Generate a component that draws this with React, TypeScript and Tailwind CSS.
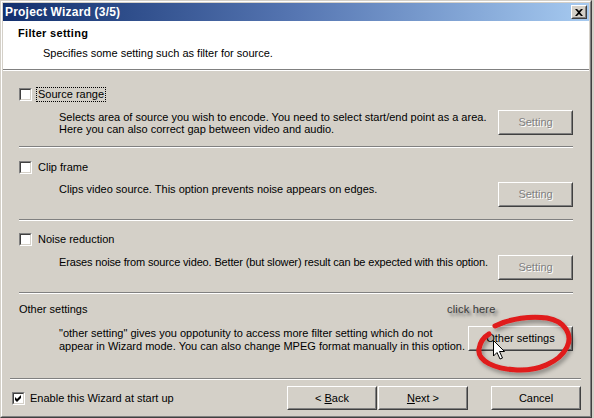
import React from "react";

function Button({
  children,
  w = 75,
  h = 25,
  disabled,
}: {
  children: React.ReactNode;
  w?: number;
  h?: number;
  disabled?: boolean;
}) {
  return (
    <div
      style={{ width: w, height: h }}
      className="shrink-0 bg-[#d4d0c8] border border-t-white border-l-white border-r-[#404040] border-b-[#404040]"
    >
      <div
        className={`h-full w-full border border-t-[#d4d0c8] border-l-[#d4d0c8] border-r-[#808080] border-b-[#808080] flex items-center justify-center leading-none whitespace-nowrap ${
          disabled ? "text-[#808080] [text-shadow:1px_1px_0_#ffffff]" : "text-black"
        }`}
      >
        {children}
      </div>
    </div>
  );
}

function Checkbox({ checked }: { checked?: boolean }) {
  return (
    <div className="w-[13px] h-[13px] shrink-0 border border-t-[#808080] border-l-[#808080] border-r-white border-b-white">
      <div className="w-full h-full border border-t-[#404040] border-l-[#404040] border-r-[#d4d0c8] border-b-[#d4d0c8] bg-white flex items-center justify-center">
        {checked && (
          <svg width="7" height="7" viewBox="0 0 7 7">
            <polygon points="0,2 2,4 6,0 6,3 2,7 0,5" fill="#000" />
          </svg>
        )}
      </div>
    </div>
  );
}

function Sep() {
  return <div className="h-[2px] border-t border-t-[#808080] border-b border-b-white" />;
}

function Section({
  label,
  lines,
  focus,
  tight,
  rowTop,
  btnTop,
  sepTop,
}: {
  label: string;
  lines: string[];
  focus?: boolean;
  tight?: boolean;
  rowTop: string;
  btnTop: string;
  sepTop: string;
}) {
  return (
    <div className="px-[16px]">
      <div className={`${rowTop} h-[16px] flex items-center`}>
        <Checkbox />
        <span
          className={`ml-[4px] px-[1px] leading-[13px] ${
            focus ? "border border-dotted border-black" : "border border-transparent"
          }`}
        >
          {label}
        </span>
      </div>
      <div className={`${btnTop} flex items-start`}>
        <div
          className={`pl-[40px] pt-[1px] flex-1 min-w-0 leading-[12px] whitespace-nowrap ${
            tight ? "tracking-[-0.15px]" : ""
          }`}
        >
          {lines.map((l) => (
            <div key={l}>{l}</div>
          ))}
        </div>
        <Button disabled>Setting</Button>
      </div>
      <div className={sepTop}>
        <Sep />
      </div>
    </div>
  );
}

export default function App() {
  return (
    <div className="w-[594px] h-[418px] bg-[#d4d0c8] font-['Liberation_Sans',Arial,sans-serif] text-[11px] text-black">
      <div className="relative w-[592px] h-[418px] border border-t-[#d4d0c8] border-l-[#d4d0c8] border-r-[#404040] border-b-[#404040]">
        <div className="h-full border border-t-white border-l-white border-r-[#808080] border-b-[#808080] p-[1px] flex flex-col">
          {/* title bar */}
          <div className="h-[18px] shrink-0 flex items-center bg-gradient-to-r from-[#13306e] via-[#5676b2] to-[#a6caf0] pl-[2px] pr-[2px]">
            <span className="text-white font-bold text-[12px] tracking-[0.2px] flex-1">Project Wizard (3/5)</span>
            <div className="w-[16px] h-[14px] bg-[#d4d0c8] border border-t-white border-l-white border-r-[#404040] border-b-[#404040]">
              <div className="w-full h-full border border-t-[#d4d0c8] border-l-[#d4d0c8] border-r-[#808080] border-b-[#808080] flex items-center justify-center">
                <svg width="8" height="7" viewBox="0 0 8 7">
                  <path d="M0 0h2l2 2 2-2h2L5 3.5 8 7H6L4 5 2 7H0l3-3.5z" fill="#000" />
                </svg>
              </div>
            </div>
          </div>

          {/* header */}
          <div className="h-[48px] shrink-0 bg-white pt-[6px]">
            <div className="pl-[15px] font-bold tracking-[0.3px] leading-[13px]">Filter setting</div>
            <div className="pl-[40px] mt-[7px] leading-[13px]">Specifies some setting such as filter for source.</div>
          </div>
          <Sep />

          {/* body */}
          <div className="flex-1 flex flex-col">
            <Section
              label="Source range"
              focus
              lines={[
                "Selects area of source you wish to encode. You need to select start/end point as a area.",
                "Here you can also correct gap between video and audio.",
              ]}
              rowTop="mt-[15px]"
              btnTop="mt-[8px]"
              sepTop="mt-[11px]"
            />
            <Section
              label="Clip frame"
              lines={["Clips video source. This option prevents noise appears on edges."]}
              rowTop="mt-[11px]"
              btnTop="mt-[7px]"
              sepTop="mt-[12px]"
            />
            <Section
              label="Noise reduction"
              tight
              lines={["Erases noise from source video. Better (but slower) result can be expected with this option."]}
              rowTop="mt-[10px]"
              btnTop="mt-[8px]"
              sepTop="mt-[12px]"
            />

            <div className="px-[16px]">
              <div className="mt-[7px] h-[16px] flex items-center">
                <span className="flex-1">Other settings</span>
                <span className="w-[126px] text-[#3a3a3a] tracking-[0.2px] [text-shadow:3px_3px_3px_#707070]">click here</span>
              </div>
              <div className="mt-[9px] flex items-start">
                <div className="pl-[40px] pt-[1px] flex-1 min-w-0 leading-[13px] whitespace-nowrap">
                  <div>"other setting" gives you oppotunity to access more filter setting which do not</div>
                  <div>appear in Wizard mode. You can also change MPEG format manually in this option.</div>
                </div>
                <Button w={105}>Other settings</Button>
              </div>
            </div>

            <div className="mt-[25px] pl-[7px] pr-[8px]">
              <Sep />
              <div className="mt-[6px] h-[24px] flex items-center">
                <div className="ml-[2px]">
                  <Checkbox checked />
                </div>
                <span className="ml-[5px] flex-1">Enable this Wizard at start up</span>
                <Button w={90} h={24}>
                  &lt;&nbsp; <u>B</u>ack
                </Button>
                <div className="w-[1px]" />
                <Button w={90} h={24}>
                  <u>N</u>ext &gt;
                </Button>
                <div className="w-[23px]" />
                <Button w={90} h={24}>
                  Cancel
                </Button>
              </div>
            </div>
          </div>
        </div>

        {/* annotation: red circle + cursor */}
        <svg
          className="absolute left-[470px] top-[308px] pointer-events-none"
          width="110"
          height="70"
          viewBox="0 0 110 70"
        >
          <defs>
            <filter id="sh" x="-20%" y="-20%" width="140%" height="140%">
              <feDropShadow dx="2" dy="3" stdDeviation="2" floodColor="#000" floodOpacity="0.35" />
            </filter>
          </defs>
          <path
            d="M24 17 C40 9 60 7 76 9 C94 12 102 26 96 38 C88 54 66 62 46 61 C24 60 6 52 8 40 C9 33 13 28 18 25"
            fill="none"
            stroke="#e01a1a"
            strokeWidth="5"
            strokeLinecap="round"
            filter="url(#sh)"
          />
        </svg>
        <svg className="absolute left-[492px] top-[339px] pointer-events-none" width="13" height="20" viewBox="0 0 13 20">
          <path d="M0.5 0.5 V16 L4 12.5 L7 19 L9.5 18 L6.5 11.5 H11.5 Z" fill="#fff" stroke="#000" strokeWidth="1" strokeLinejoin="miter" />
        </svg>
      </div>
    </div>
  );
}
